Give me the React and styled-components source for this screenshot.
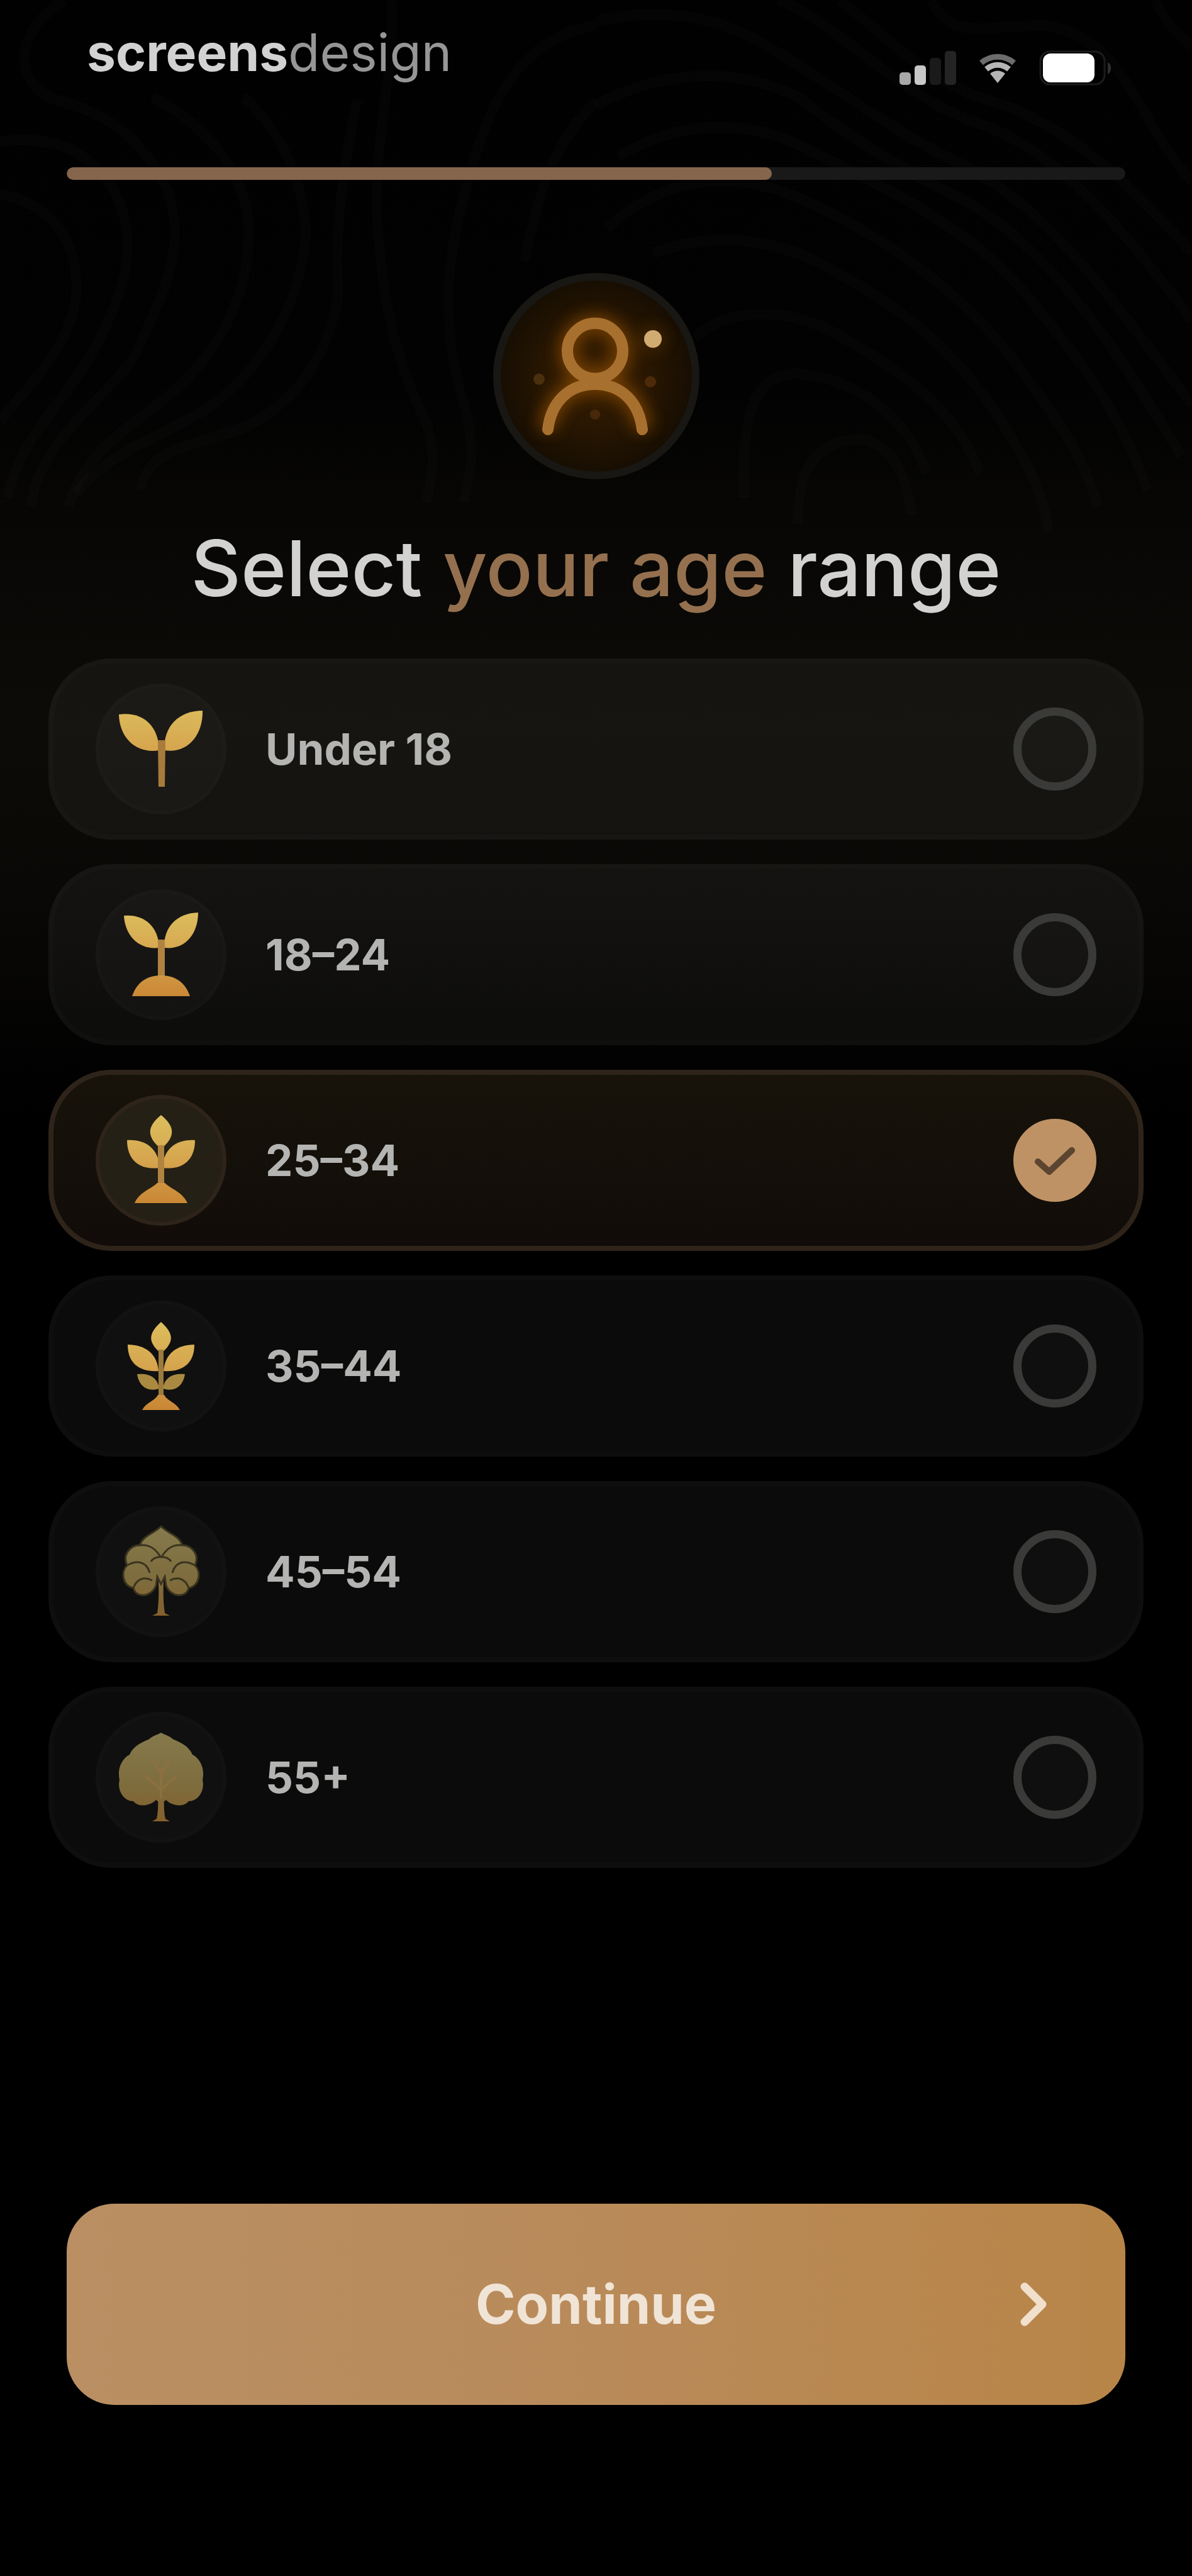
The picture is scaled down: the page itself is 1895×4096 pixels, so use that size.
import React, { useState } from "react";
import styled, { createGlobalStyle } from "styled-components";

const GlobalStyle = createGlobalStyle`
  *, *::before, *::after {
    box-sizing: border-box;
  }

  body {
    margin: 0;
    background: #000000;
    font-family: Inter, "Liberation Sans", sans-serif;
  }
`;

const Screen = styled.main`
  position: relative;
  min-height: 100vh;
  display: flex;
  flex-direction: column;
  padding-bottom: 272px;
  background: linear-gradient(180deg, #010101 0%, #020202 15%, #090806 22%, #0c0b08 28%, #090806 35%, #010101 42%, #000000 46%);
`;

const Backdrop = styled.svg`
  position: absolute;
  top: 0;
  left: 0;
  width: 100%;
  height: auto;
  fill: none;
  stroke: rgba(255, 255, 255, 0.016);
  stroke-width: 26px;
  pointer-events: none;
`;

const StatusBar = styled.header`
  position: relative;
  display: flex;
  justify-content: space-between;
  align-items: flex-start;
  height: 266px;
  padding: 34px 125px 0 138px;
`;

const Logo = styled.div`
  font-size: 82px;
  line-height: 100px;
  font-weight: 700;
  color: #d2d2d2;

  span {
    font-weight: 400;
    color: #969696;
  }
`;

const StatusIcons = styled.div`
  display: flex;
  gap: 28px;
  padding-top: 46px;

  svg {
    height: 56px;
    width: auto;
  }
`;

const Progress = styled.div`
  position: relative;
  height: 20px;
  margin: 0 106px;
  border-radius: 10px;
  background: #191919;
  overflow: hidden;
`;

const ProgressFill = styled.div`
  height: 100%;
  border-radius: 10px;
  background: #85654b;
`;

const Intro = styled.section`
  position: relative;
  display: flex;
  flex-direction: column;
  align-items: center;
  gap: 72px;
  padding-top: 148px;
`;

const Avatar = styled.div`
  width: 328px;
  height: 328px;
  border: 12px solid #181713;
  border-radius: 50%;
  background: radial-gradient(circle, #3a1f02 0%, #271602 40%, #150d02 75%, #0f0a03 100%);

  svg {
    display: block;
    width: 100%;
    height: 100%;
  }
`;

const Heading = styled.h1`
  margin: 0;
  font-size: 123px;
  line-height: 140px;
  font-weight: 500;
  color: #d2d2d0;

  span {
    color: #94704f;
  }
`;

const Options = styled.fieldset`
  position: relative;
  display: flex;
  flex-direction: column;
  gap: 39px;
  margin: 73px 77px;
  padding: 0;
  border: 0;
  min-width: 0;
`;

const Option = styled.label`
  display: flex;
  align-items: center;
  gap: 62px;
  height: 288px;
  padding: 0 67px;
  border: 8px solid ${({ $selected }) => ($selected ? "#2f241a" : "rgba(255, 255, 255, 0.015)")};
  border-radius: 100px;
  background: ${({ $selected }) => ($selected ? "linear-gradient(180deg, #17130a, #110c09)" : "rgba(255, 255, 255, 0.045)")};
  cursor: pointer;
`;

const OptionIcon = styled.div`
  width: 208px;
  height: 208px;
  border-radius: 50%;
  border: 6px solid ${({ $selected }) => ($selected ? "#2e241a" : "rgba(255, 255, 255, 0.01)")};
  background: ${({ $selected }) => ($selected ? "#242015" : "rgba(255, 255, 255, 0.025)")};

  svg {
    display: block;
    width: 100%;
    height: 100%;
  }
`;

const OptionLabel = styled.span`
  flex: 1;
  font-size: 69px;
  line-height: 84px;
  font-weight: 700;
  color: #b4b4b2;
`;

const RadioBox = styled.span`
  display: grid;
  place-items: center;

  & > * {
    grid-area: 1 / 1;
  }

  svg {
    pointer-events: none;
  }
`;

const Radio = styled.input`
  appearance: none;
  width: 132px;
  height: 132px;
  margin: 0;
  border: 13px solid #3a3a39;
  border-radius: 50%;
  background: rgba(255, 255, 255, 0.02);
  cursor: pointer;

  &:checked {
    border-color: #bf9265;
    background: #bf9265;
  }
`;

const Continue = styled.button`
  position: relative;
  display: grid;
  align-items: center;
  height: 320px;
  margin: auto 106px 0;
  padding: 0 118px;
  border: 0;
  border-radius: 76px;
  background: linear-gradient(90deg, #b98f63 0%, #b98b5b 45%, #b88548 100%);
  color: #f0e4d6;
  font-family: inherit;
  font-size: 86px;
  line-height: 104px;
  font-weight: 700;
  cursor: pointer;

  & > * {
    grid-area: 1 / 1;
  }

  svg {
    justify-self: end;
  }
`;

const Contours = () => (
  <Backdrop viewBox="0 0 2160 1600" aria-hidden="true">
    <g transform="scale(0.689 0.765)">
      <path d="M170 0C40 70 30 190 140 235C300 270 380 340 440 450C490 580 440 680 350 850C250 970 110 1040 80 1200" />
      <path d="M0 335C130 320 230 350 300 450C370 580 330 690 240 840C170 950 50 1040 20 1180" />
      <path d="M0 460C130 480 210 570 200 700C180 840 60 920 0 1000" />
      <path d="M400 230C530 290 620 380 650 500C670 640 610 780 510 880C390 1000 230 1040 180 1200" />
      <path d="M640 230C740 310 800 430 805 560C790 700 720 830 600 930C470 1030 300 1050 200 1170" />
      <path d="M940 235C900 400 880 560 890 700C860 850 780 950 650 1010C500 1060 390 1060 370 1160" />
      <path d="M1030 0C1040 160 990 300 990 480C1000 700 1040 850 1110 980C1150 1060 1140 1120 1120 1190" />
      <path d="M1568 60C1350 90 1270 280 1225 450C1160 650 1170 800 1220 960C1260 1080 1230 1120 1220 1190" />
      <path d="M1568 240C1450 340 1410 480 1380 620" />
    </g>
    <g transform="translate(1080 0) scale(0.689 0.765)">
      <path d="M0 50C200 10 350 50 470 120C620 200 780 310 940 380C1180 480 1350 700 1568 960" />
      <path d="M0 250C180 160 380 160 530 230C680 330 800 400 980 480C1200 600 1350 800 1540 1080" />
      <path d="M60 370C250 270 430 290 570 360C800 460 1020 560 1160 730C1280 860 1380 980 1450 1160" />
      <path d="M30 540C180 420 330 410 480 450C740 540 980 700 1120 880C1220 1000 1280 1080 1320 1200" />
      <path d="M150 600C330 540 500 570 640 650C850 750 1000 880 1120 1080C1160 1140 1180 1200 1190 1260" />
      <path d="M260 800C360 720 520 730 650 800C800 880 940 960 1010 1120" />
      <path d="M390 1180C380 1000 410 890 520 885C680 890 820 990 870 1120" />
      <path d="M530 1240C530 1100 590 1040 700 1040C790 1060 820 1140 830 1220" />
      <path d="M480 0C650 60 780 220 1000 290C1200 350 1370 520 1568 760" />
      <path d="M640 0C760 80 860 190 1040 240C1230 290 1400 430 1568 600" />
      <path d="M880 0C940 100 1020 60 1180 60C1400 90 1420 290 1568 430" />
      <path d="M1470 0C1500 60 1540 90 1568 110" />
    </g>
  </Backdrop>
);

const SignalIcon = () => (
  <svg viewBox="0 0 90 56" aria-label="Signal">
    <rect x="0" y="35" width="18" height="20" rx="5" fill="#a8a8a8" />
    <rect x="24" y="24" width="18" height="31" rx="5" fill="#c8c8c8" />
    <rect x="48" y="12" width="18" height="43" rx="5" fill="#1a1a1a" />
    <rect x="72" y="1" width="18" height="54" rx="5" fill="#242424" />
  </svg>
);

const WifiIcon = () => (
  <svg viewBox="0 0 76 56" aria-label="Wi-Fi">
    <path d="M12 20C27 7 49 7 64 20" fill="none" stroke="#6c6c6c" strokeWidth="9" />
    <path d="M20 30C31 21 45 21 56 30" fill="none" stroke="#b5b5b5" strokeWidth="9" />
    <path d="M26 37C33 31 43 31 50 37L38 52Z" fill="#b5b5b5" />
  </svg>
);

const BatteryIcon = () => (
  <svg viewBox="0 0 118 56" aria-label="Battery">
    <rect x="2" y="2" width="102" height="52" rx="15" fill="none" stroke="#1c1c1c" strokeWidth="3" />
    <rect x="6" y="5" width="82" height="46" rx="12" fill="#ffffff" />
    <path d="M109 19C116 22 116 35 109 38Z" fill="#2e2e2e" />
  </svg>
);

const PersonIcon = () => (
  <svg viewBox="12 12 304 304" aria-hidden="true">
    <defs>
      <filter id="glow" x="-40%" y="-40%" width="180%" height="180%">
        <feGaussianBlur stdDeviation="12" />
      </filter>
    </defs>
    <g fill="none" stroke="#8f4d06" strokeWidth="30" filter="url(#glow)" opacity="0.7">
      <circle cx="162" cy="124" r="43" />
      <path d="M86 250C91 205 120 177 162 177C204 177 233 205 238 250" />
      <circle cx="254" cy="105" r="3" />
    </g>
    <g fill="none" stroke="#a8702f" strokeWidth="18" strokeLinecap="round">
      <circle cx="162" cy="124" r="44" />
      <path d="M87 249C92 205 121 177 162 177C203 177 232 205 237 249" />
    </g>
    <circle cx="254" cy="105" r="14" fill="#d2ab72" />
    <circle cx="73" cy="169" r="9" fill="#4a300c" />
    <circle cx="250" cy="173" r="9" fill="#4d2a08" />
    <circle cx="162" cy="225" r="8" fill="#48280a" />
  </svg>
);

const Plant = ({ children }) => (
  <svg viewBox="-98 -98 196 196" aria-hidden="true">
    <defs>
      <linearGradient id="gold" gradientUnits="userSpaceOnUse" x1="0" y1="-70" x2="0" y2="70">
        <stop offset="0" stopColor="#dcbe5e" />
        <stop offset="0.5" stopColor="#d6a54e" />
        <stop offset="1" stopColor="#c98634" />
      </linearGradient>
      <linearGradient id="olive" gradientUnits="userSpaceOnUse" x1="0" y1="-70" x2="0" y2="70">
        <stop offset="0" stopColor="#857a4c" />
        <stop offset="0.6" stopColor="#7e6c3d" />
        <stop offset="1" stopColor="#85602c" />
      </linearGradient>
    </defs>
    {children}
  </svg>
);

const SeedlingIcon = () => (
  <Plant>
    <g fill="url(#gold)">
      <path d="M-3 2C-38 8 -66 -16 -67 -55C-32 -60 -4 -40 -3 2Z" />
      <path d="M5 2C4 -36 28 -61 66 -61C67 -22 42 8 5 2Z" />
      <path d="M-5 -14H7L6 60H-4Z" fill="#a87b3c" />
    </g>
  </Plant>
);

const SproutIcon = () => (
  <Plant>
    <g fill="url(#gold)">
      <path d="M-3 -11C-33 -7 -57 -28 -59 -62C-28 -65 -4 -46 -3 -11Z" />
      <path d="M5 -11C4 -44 25 -66 59 -67C59 -32 37 -7 5 -11Z" />
      <path d="M-5 -24H6V40H-5Z" fill="#b08440" />
      <path d="M-46 66C-38 42 -20 33 0 33C20 33 38 42 46 66Z" />
    </g>
  </Plant>
);

const YoungPlantIcon = () => (
  <Plant>
    <g fill="url(#gold)">
      <path d="M0 -72C22 -54 24 -38 0 -18C-24 -38 -22 -54 0 -72Z" />
      <path d="M-2 12C-34 16 -54 0 -54 -32C-24 -34 -4 -18 -2 12Z" />
      <path d="M2 12C34 16 54 0 54 -32C24 -34 4 -18 2 12Z" />
      <path d="M-5 -24H5V44H-5Z" fill="#b08440" />
      <path d="M-42 68C-34 50 -16 46 -6 36H6C16 46 34 50 42 68Z" />
    </g>
  </Plant>
);

const GrownPlantIcon = () => (
  <Plant>
    <g fill="url(#gold)">
      <path d="M0 -70C20 -52 22 -38 0 -20C-22 -38 -20 -52 0 -70Z" />
      <path d="M-4 8C-34 10 -53 -4 -53 -34C-26 -34 -6 -20 -4 8Z" />
      <path d="M4 8C34 10 53 -4 53 -34C26 -34 6 -20 4 8Z" />
      <path d="M-3 36C-22 42 -35 32 -38 13C-18 11 -5 19 -3 36Z" fill="#a98a40" />
      <path d="M3 36C22 42 35 32 38 13C18 11 5 19 3 36Z" fill="#a98a40" />
      <path d="M-4 -26H4V56H-4Z" fill="#9c7b3c" />
      <path d="M-30 70C-24 58 -10 56 -5 46H5C10 56 24 58 30 70Z" />
    </g>
  </Plant>
);

const TreeIcon = () => (
  <Plant>
    <g fill="url(#olive)" stroke="#3a341f" strokeWidth="3">
      <path d="M-6 66C-2 40 -4 10 -6 -10H6C4 10 2 40 6 66L14 70H-14Z" stroke="none" />
      <path d="M-8 22C-16 42 -40 42 -44 26C-62 22 -64 0 -54 -10C-62 -28 -48 -42 -34 -42C-28 -58 -12 -60 0 -72C12 -60 28 -58 34 -42C48 -42 62 -28 54 -10C64 0 62 22 44 26C40 42 16 42 8 22L6 8L0 20L-6 8Z" />
      <path d="M-54 -10C-36 -20 -22 -14 -18 2M54 -10C36 -20 22 -14 18 2M-34 -42C-18 -44 -8 -36 0 -22M34 -42C18 -44 8 -36 0 -22M-44 26C-38 10 -26 8 -14 14M44 26C38 10 26 8 14 14M-16 -16C-10 -26 10 -26 16 -16" fill="none" />
    </g>
  </Plant>
);

const OldTreeIcon = () => (
  <Plant>
    <g fill="url(#olive)">
      <path d="M-7 66C-3 50 -5 20 -7 0H7C5 20 3 50 7 66L14 70H-14Z" />
      <path d="M-8 36C-18 46 -36 48 -44 38C-60 38 -70 20 -66 4C-70 -14 -62 -30 -50 -36C-44 -50 -30 -56 -20 -60C-12 -67 -4 -68 0 -71C4 -68 12 -67 20 -60C30 -56 44 -50 50 -36C62 -30 70 -14 66 4C70 20 60 38 44 38C36 48 18 46 8 36L0 42Z" />
      <path d="M0 34V-14M0 20L-24 -2M0 20L24 -2M-2 -8L-14 -28M2 -8L14 -28" fill="none" stroke="#8c7040" strokeWidth="4" />
    </g>
  </Plant>
);

const AGE_RANGES = [
  { label: "Under 18", Icon: SeedlingIcon },
  { label: "18–24", Icon: SproutIcon },
  { label: "25–34", Icon: YoungPlantIcon },
  { label: "35–44", Icon: GrownPlantIcon },
  { label: "45–54", Icon: TreeIcon },
  { label: "55+", Icon: OldTreeIcon },
];

const AgeOption = ({ label, Icon, selected, onSelect }) => (
  <Option $selected={selected}>
    <OptionIcon $selected={selected}>
      <Icon />
    </OptionIcon>
    <OptionLabel>{label}</OptionLabel>
    <RadioBox>
      <Radio type="radio" name="age" value={label} checked={selected} onChange={onSelect} />
      {selected && (
        <svg width="72" height="72" viewBox="0 0 72 72" aria-hidden="true">
          <path d="M9 38L27 54L63 20" fill="none" stroke="#5b4530" strokeWidth="10" strokeLinecap="round" strokeLinejoin="round" />
        </svg>
      )}
    </RadioBox>
  </Option>
);

const App = () => {
  const [age, setAge] = useState("25–34");
  const progress = 66.6;

  return (
    <>
      <GlobalStyle />
      <Screen>
        <Contours />
        <StatusBar>
          <Logo>
            screens<span>design</span>
          </Logo>
          <StatusIcons>
            <SignalIcon />
            <WifiIcon />
            <BatteryIcon />
          </StatusIcons>
        </StatusBar>
        <Progress role="progressbar" aria-label="Onboarding progress" aria-valuenow={progress}>
          <ProgressFill style={{ width: `${progress}%` }} />
        </Progress>
        <Intro>
          <Avatar>
            <PersonIcon />
          </Avatar>
          <Heading>
            Select <span>your age</span> range
          </Heading>
        </Intro>
        <Options aria-label="Age range">
          {AGE_RANGES.map(({ label, Icon }) => (
            <AgeOption key={label} label={label} Icon={Icon} selected={age === label} onSelect={() => setAge(label)} />
          ))}
        </Options>
        <Continue type="button">
          <span>Continue</span>
          <svg width="52" height="84" viewBox="0 0 52 84" aria-hidden="true">
            <path d="M10 14L38 42L10 70" fill="none" stroke="#f0e0cc" strokeWidth="13" strokeLinecap="round" strokeLinejoin="round" />
          </svg>
        </Continue>
      </Screen>
    </>
  );
};

export default App;
